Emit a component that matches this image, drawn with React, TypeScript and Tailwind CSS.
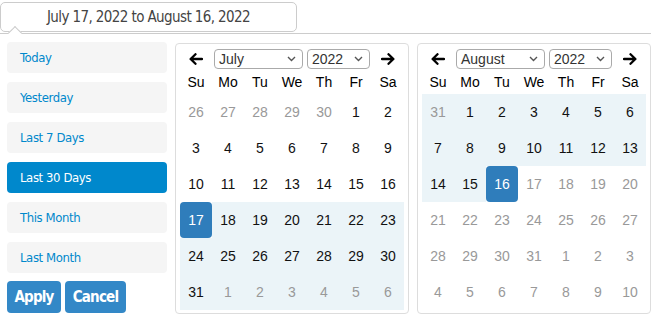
import React from 'react';

type Day = { n: number; tone: 'on' | 'off'; range?: boolean; active?: boolean };

const ranges = ['Today', 'Yesterday', 'Last 7 Days', 'Last 30 Days', 'This Month', 'Last Month'];
const weekdays = ['Su', 'Mo', 'Tu', 'We', 'Th', 'Fr', 'Sa'];

// July 2022, range starts on the 17th
const july: Day[] = [
  ...[26, 27, 28, 29, 30].map((n) => ({ n, tone: 'off' as const })),
  ...Array.from({ length: 31 }, (_, i) => {
    const n = i + 1;
    return { n, tone: 'on' as const, range: n > 17, active: n === 17 };
  }),
  ...[1, 2, 3, 4, 5, 6].map((n) => ({ n, tone: 'off' as const, range: true })),
];

// August 2022, range ends on the 16th, later days disabled
const august: Day[] = [
  { n: 31, tone: 'off', range: true },
  ...Array.from({ length: 31 }, (_, i) => {
    const n = i + 1;
    return { n, tone: n > 16 ? ('off' as const) : ('on' as const), range: n < 16, active: n === 16 };
  }),
  ...[1, 2, 3, 4, 5, 6, 7, 8, 9, 10].map((n) => ({ n, tone: 'off' as const })),
];

const ArrowIcon = ({ dir }: { dir: 'left' | 'right' }) => (
  <svg width="14" height="12" viewBox="0 0 14 12" className={dir === 'right' ? 'rotate-180' : ''}>
    <path d="M6.5 1.2 L1.6 6 L6.5 10.8 M1.8 6 H13" fill="none" stroke="#000" strokeWidth="2.3" strokeLinecap="round" strokeLinejoin="round" />
  </svg>
);

const Select = ({ label, width }: { label: string; width: string }) => (
  <div className={`flex h-[20px] ${width} items-center justify-between rounded-[4px] border border-[#aaa] bg-white pl-[4px] pr-[6px] text-[14px] text-[#333]`}>
    <span>{label}</span>
    <svg width="9" height="6" viewBox="0 0 9 6">
      <path d="M1 1 L4.5 4.5 L8 1" fill="none" stroke="#555" strokeWidth="1.4" />
    </svg>
  </div>
);

const Calendar = ({ month, days }: { month: string; days: Day[] }) => (
  <div className="mt-[1px] w-[234px] rounded-[4px] border border-[#ddd] bg-white px-[4px] pt-[3px] pb-[3px] font-['Liberation_Sans',Arial,sans-serif]">
    <div className="grid h-[24px] grid-cols-7 items-center">
      <div className="flex justify-center"><ArrowIcon dir="left" /></div>
      <div className="col-span-5 flex justify-center gap-[4px]">
        <Select label={month} width="w-[89px]" />
        <Select label="2022" width="w-[63px]" />
      </div>
      <div className="flex justify-center"><ArrowIcon dir="right" /></div>
    </div>
    <div className="grid h-[23px] grid-cols-7 items-center text-center text-[14px] text-black">
      {weekdays.map((w) => (
        <div key={w}>{w}</div>
      ))}
    </div>
    <div className="grid grid-cols-7 text-[14px]">
      {days.map((d, i) => (
        <div
          key={i}
          className={`flex h-[36px] items-center justify-center ${
            d.active
              ? 'rounded-[4px] bg-[#2f7dbb] text-white'
              : `${d.range ? 'bg-[#ebf4f8]' : ''} ${d.tone === 'off' ? 'text-[#999]' : 'text-[#111]'}`
          }`}
        >
          {d.n}
        </div>
      ))}
    </div>
  </div>
);

export default function App() {
  return (
    <div className="relative h-[317px] w-[651px] overflow-hidden bg-white font-['DejaVu_Sans_Condensed','DejaVu_Sans',sans-serif] font-stretch-condensed">
      <div className="mt-[2px] flex h-[30px] w-[297px] items-center justify-center rounded-[5px] border border-[#ccc] text-[15px] tracking-[-0.6px] text-[#444]">
        July 17, 2022 to August 16, 2022
      </div>

      <div className="relative mt-[1px] border-t border-[#ccc]">
        <div className="absolute left-[10px] top-[-6px] h-[10px] w-[10px] rotate-45 border-l border-t border-[#ccc] bg-white" />

        <div className="flex pl-[7px] pt-[8px]">
          <div className="flex w-[160px] flex-col">
            {ranges.map((r) => (
              <div
                key={r}
                className={`mb-[9px] flex h-[31px] items-center rounded-[4px] pl-[13px] text-[13px] tracking-[-0.4px] ${
                  r === 'Last 30 Days' ? 'bg-[#08c] text-white' : 'bg-[#f5f5f5] text-[#08c]'
                }`}
              >
                {r}
              </div>
            ))}
            <div className="-mt-[1px] flex gap-[4px]">
              <button className="h-[32px] w-[54px] rounded-[4px] bg-[#3388c7] text-[15px] font-bold tracking-[-0.8px] text-white">Apply</button>
              <button className="h-[32px] w-[61px] rounded-[4px] bg-[#3388c7] text-[15px] font-bold tracking-[-0.8px] text-white">Cancel</button>
            </div>
          </div>

          <div className="ml-[8px]">
            <Calendar month="July" days={july} />
          </div>
          <div className="ml-[8px]">
            <Calendar month="August" days={august} />
          </div>
        </div>
      </div>
    </div>
  );
}
